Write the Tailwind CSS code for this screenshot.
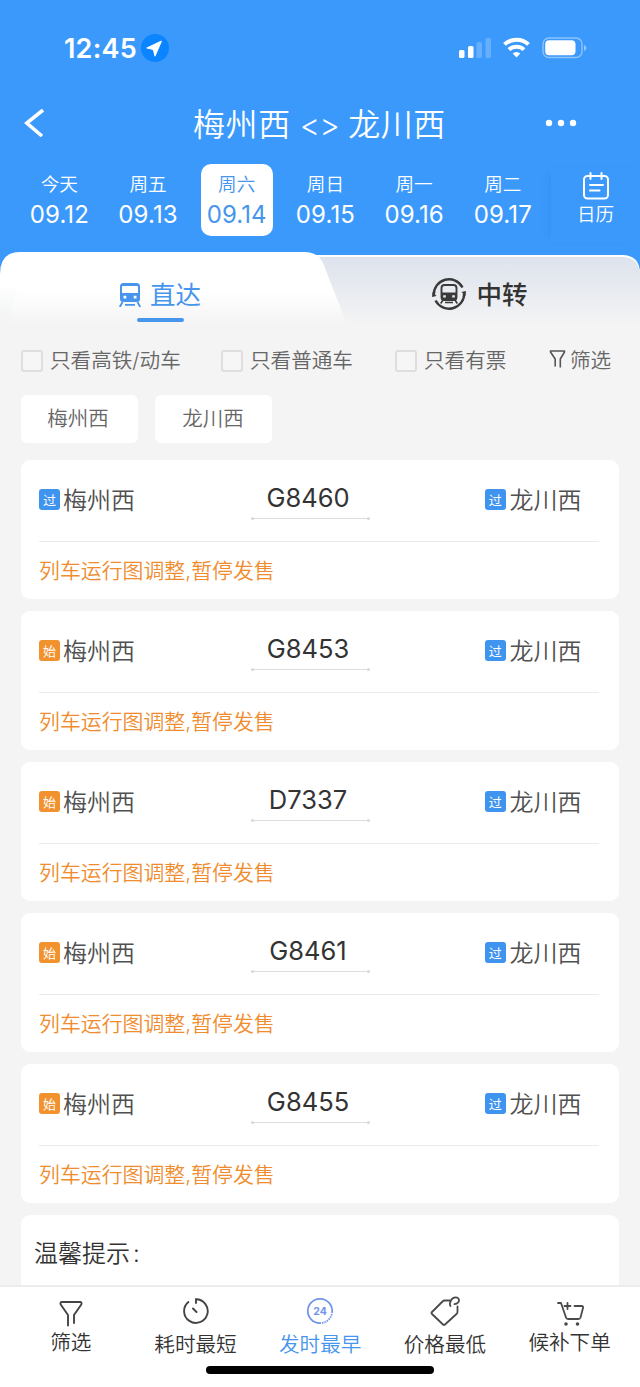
<!DOCTYPE html>
<html lang="zh-CN">
<head>
<meta charset="utf-8">
<title>梅州西 - 龙川西</title>
<script src="https://cdn.jsdelivr.net/npm/@tailwindcss/browser@4"></script>
</head>
<body class="w-[640px] h-[1387px] overflow-hidden bg-[#f4f4f4] font-['Inter','Noto_Sans_CJK_SC',sans-serif] font-[350] whitespace-nowrap">
<div class="flex h-[1387px] w-[640px] flex-col overflow-hidden">

<header class="h-[252px] shrink-0 bg-[#3b99fc] text-white">
  <div class="flex h-24 items-center pl-[64px] pr-[53px]">
    <span class="w-[77px] pt-[2px] text-[27px] font-semibold tracking-[0.2px]">12:45</span>
    <svg class="size-7" viewBox="0 0 28 28"><circle cx="14" cy="14" r="14" fill="#0a84ff"/><path d="M20.200 7.400 6 14l6.400 1.400L14 21.800z" fill="#fff" stroke="#fff" stroke-width="1.200" stroke-linejoin="round"/></svg>
    <svg class="ml-auto h-[22px] w-[128px]" viewBox="0 0 128 22" fill="#fff">
      <rect x="0" y="13" width="5.500" height="8" rx="1.600"/><rect x="9" y="9" width="5.500" height="12" rx="1.600"/><rect x="17.500" y="5" width="5.500" height="16" rx="1.600" opacity=".22"/><rect x="26.500" y="1" width="5.500" height="20" rx="1.600" opacity=".22"/>
      <g fill="none" stroke="#fff" stroke-width="4"><path d="M45.500 7.400a17.500 17.500 0 0 1 24 0"/><path d="M50 12.600a11 11 0 0 1 15 0"/></g><path d="M57.500 20.500 53.700 16.600a5.500 5.500 0 0 1 7.600 0z"/>
      <rect x="84" y="1" width="39" height="19.500" rx="6" fill="none" stroke="#fff" stroke-width="1.400" opacity=".42"/><rect x="86.200" y="3.300" width="30.300" height="15" rx="4"/><path d="M125.200 8v6q2.200-1 2.200-3t-2.200-3z" opacity=".5"/>
    </svg>
  </div>
  <div class="flex h-14 items-center pl-[24px]">
    <svg class="mb-[2px] h-7 w-[169px]" viewBox="0 0 169 28"><path d="M19 1 2.800 14 18 27" fill="none" stroke="#fff" stroke-width="3.600"/></svg>
    <div class="flex w-[253px] items-center justify-between pt-px text-[32px] leading-[48px]"><span class="tracking-[0.6px]">梅州西</span><span class="text-[31px] tracking-[-0.500px]">&lt;&gt;</span><span class="tracking-[0.6px]">龙川西</span></div>
    <svg class="ml-[96px] mb-[2px] h-2 w-[36px]" viewBox="0 0 36 8" fill="#fff"><circle cx="7" cy="4" r="3.200"/><circle cx="19" cy="4" r="3.200"/><circle cx="31" cy="4" r="3.200"/></svg>
  </div>
  <div class="flex pl-[15px] pt-3">
    <div class="flex w-[88.700px] justify-center"><div class="flex h-[72px] w-[72px] flex-col items-center pt-[7px]"><span class="text-[18.600px] leading-[27px]">今天</span><span class="text-[24px] font-normal leading-[33px] tracking-[0.1px]">09.12</span></div></div>
    <div class="flex w-[88.700px] justify-center"><div class="flex h-[72px] w-[72px] flex-col items-center pt-[7px]"><span class="text-[18.600px] leading-[27px]">周五</span><span class="text-[24px] font-normal leading-[33px] tracking-[0.1px]">09.13</span></div></div>
    <div class="flex w-[88.700px] justify-center"><div class="flex h-[72px] w-[72px] flex-col items-center rounded-[10px] bg-white pt-[7px] text-[#4795ec]"><span class="text-[18.600px] leading-[27px]">周六</span><span class="text-[24px] font-normal leading-[33px] tracking-[0.1px]">09.14</span></div></div>
    <div class="flex w-[88.700px] justify-center"><div class="flex h-[72px] w-[72px] flex-col items-center pt-[7px]"><span class="text-[18.600px] leading-[27px]">周日</span><span class="text-[24px] font-normal leading-[33px] tracking-[0.1px]">09.15</span></div></div>
    <div class="flex w-[88.700px] justify-center"><div class="flex h-[72px] w-[72px] flex-col items-center pt-[7px]"><span class="text-[18.600px] leading-[27px]">周一</span><span class="text-[24px] font-normal leading-[33px] tracking-[0.1px]">09.16</span></div></div>
    <div class="flex w-[88.700px] justify-center"><div class="flex h-[72px] w-[72px] flex-col items-center pt-[7px]"><span class="text-[18.600px] leading-[27px]">周二</span><span class="text-[24px] font-normal leading-[33px] tracking-[0.1px]">09.17</span></div></div>
    <div class="ml-[4px] mt-1 flex h-[74px] flex-1 flex-col items-center bg-[#3b99fc] pt-1 shadow-[-6px_0_8px_-5px_rgba(30,110,210,0.22)]">
      <svg class="size-[28px]" viewBox="0 0 28 28" fill="none" stroke="#fff" stroke-width="2"><rect x="2" y="4" width="24" height="22.500" rx="3.500"/><path d="M8.500 1v6M19.500 1v6M8 13h13M8 18.500h9.500" stroke-linecap="round"/></svg>
      <span class="text-[18.500px] leading-[29px]">日历</span>
    </div>
  </div>
</header>

<nav class="relative h-[78px] shrink-0">
  <svg class="absolute inset-0 h-[78px] w-[640px]" viewBox="0 0 640 78">
    <defs>
      <linearGradient id="g1" gradientUnits="userSpaceOnUse" x1="0" y1="0" x2="0" y2="72"><stop offset="0" stop-color="#fff"/><stop offset=".55" stop-color="#fff"/><stop offset="1" stop-color="#f4f4f4"/></linearGradient>
      <linearGradient id="g2" x1="0" y1="0" x2="0" y2="1"><stop offset="0" stop-color="#dde3ed"/><stop offset=".95" stop-color="#f4f4f4"/></linearGradient>
      <linearGradient id="g3" gradientUnits="userSpaceOnUse" x1="0" y1="0" x2="0" y2="78"><stop offset="0" stop-color="#fff"/><stop offset=".42" stop-color="#fff"/><stop offset=".8" stop-color="#f4f5f5"/><stop offset="1" stop-color="#f4f4f4"/></linearGradient>
    </defs>
    <rect width="640" height="30" fill="#3b99fc"/>
    <path d="M300 3H622Q640 3 640 22V78H300z" fill="#fff"/>
    <path d="M300 5H621Q640 5 640 24V78H300z" fill="url(#g2)"/>
    <path d="M0 22Q0 0 20 0H150V78H0z" fill="url(#g3)"/>
    <path d="M17 40Q21 0 34 0H304Q318 0 323 11L348 75V78H4z" fill="url(#g1)"/>
  </svg>
  <div class="relative flex h-[78px]">
    <div class="flex w-[320px] flex-col items-center pt-[24px] text-[#4795ec]">
      <div class="flex items-center gap-[9px]">
        <svg class="mb-px h-6 w-[22px]" viewBox="0 0 22 24"><path fill="#4795ec" fill-rule="evenodd" d="M4.500 0h13Q21 0 21 3.500V16q0 3-3 3H4q-3 0-3-3V3.500Q1 0 4.500 0zM4 3Q3 3 3 4v6h16V4q0-1-1-1zM4.500 12.800v2.800h2.800v-2.800zM14.700 12.800v2.800h2.800v-2.800z"/><path d="M3.500 19 .8 24M18.500 19l2.700 5M6 21.900h10" stroke="#4795ec" stroke-width="1.800"/></svg>
        <span class="text-[25.500px] font-normal leading-[38px]">直达</span>
      </div>
      <div class="mt-[4px] h-1 w-[47px] rounded-full bg-[#4795ec]"></div>
    </div>
    <div class="flex w-[320px] items-start justify-center gap-[10px] pt-[24px] text-[#333]">
      <svg class="mt-[1px] size-[34px]" viewBox="0 0 34 34" fill="none" stroke="#3a3a3a"><path d="M1.800 18A15.200 15.200 0 0 1 30.500 10.500M32.200 16A15.200 15.200 0 0 1 3.500 23.500" stroke-width="2.400"/><path d="M.500 15 0 20l4.500-1zM33.500 19l.5-5-4.500 1z" fill="#3a3a3a" stroke="none"/><rect x="9.500" y="8" width="15" height="15" rx="3" stroke-width="1.900"/><path d="M9.500 16h15v5q0 2-2 2h-11q-2 0-2-2z" fill="#3a3a3a"/><path d="M11.200 19.300h2.600M20.200 19.300h2.600" stroke="#eee" stroke-width="2.200"/><path d="m11 23-2.300 3.500M23 23l2.300 3.500M13 25.500h8" stroke-width="1.600"/></svg>
      <span class="text-[25.500px] font-medium leading-[38px]">中转</span>
    </div>
  </div>
</nav>

<div class="flex h-[61px] shrink-0 items-center pl-[21px] text-[20.600px] leading-[30px] text-[#666]">
  <div class="flex w-[200px] items-center gap-[7px]"><i class="size-[22px] rounded-[3px] border-2 border-[#dedede] bg-[#f6f6f6]"></i><span class="pt-px">只看高铁/动车</span></div>
  <div class="flex w-[174px] items-center gap-[7px]"><i class="size-[22px] rounded-[3px] border-2 border-[#dedede] bg-[#f6f6f6]"></i><span class="pt-px">只看普通车</span></div>
  <div class="flex w-[154px] items-center gap-[7px]"><i class="size-[22px] rounded-[3px] border-2 border-[#dedede] bg-[#f6f6f6]"></i><span class="pt-px">只看有票</span></div>
  <div class="flex items-center gap-[4px]"><svg class="mb-[3px] h-[18px] w-[17px]" viewBox="0 0 17 18" fill="none" stroke="#555" stroke-width="1.600"><path d="M6.200 16.500V9L1.500 2V1h14v1l-4.200 7v8.500" stroke-linejoin="round"/></svg><span>筛选</span></div>
</div>

<div class="flex h-[69px] shrink-0 gap-[17px] pl-[20.500px] pt-[3.500px] text-[20.500px] leading-[47px] text-[#666]">
  <div class="h-[48px] w-[117px] rounded-md bg-white pr-[2px] text-center">梅州西</div>
  <div class="h-[48px] w-[117px] rounded-md bg-white text-center">龙川西</div>
</div>

<main id="list" class="flex h-[825px] shrink-0 flex-col gap-3 overflow-hidden px-[21px]">
  <template id="card">
    <section class="h-[139px] shrink-0 rounded-[9px] bg-white pl-[18px] pr-[20px]">
      <div class="flex h-[82px] items-start border-b border-[#ebebeb] pt-[20px]">
        <div class="flex items-center gap-[3px] pt-[1px]"><b class="from grid h-[21px] w-[21px] place-items-center rounded-[3px] pt-px text-[13px] font-normal leading-[20px] text-white"></b><span class="pt-[3px] text-[24px] leading-[33px] text-[#505050]">梅州西</span></div>
        <div class="ml-[116px] w-[119px] text-center">
          <div class="num pr-[5px] text-[25.500px] font-normal leading-[36px] text-[#333]"></div>
          <div class="mt-[1px] flex h-[3px] items-center justify-between bg-[linear-gradient(#ddd,#ddd)] bg-[length:100%_1px] bg-center bg-no-repeat"><i class="h-[3px] w-[3px] rounded-full bg-[#d9d9d9]"></i><i class="h-[3px] w-[3px] rounded-full bg-[#d9d9d9]"></i></div>
        </div>
        <div class="ml-[115px] flex items-center gap-[4px] pt-[1px]"><b class="grid h-[21px] w-[20.500px] place-items-center rounded-[3px] bg-[#3f94f0] pt-px text-[13px] font-normal leading-[20px] text-white">过</b><span class="pt-[3px] text-[24px] leading-[33px] text-[#505050]">龙川西</span></div>
      </div>
      <div class="text-[20.900px] leading-[57px] text-[#f08c2e]">列车运行图调整,暂停发售</div>
    </section>
  </template>
  <section class="h-[139px] shrink-0 rounded-[9px] bg-white px-[13px] pt-[21px] text-[24px] leading-[36px] text-[#333]">温馨提示<span class="ml-[3px]">:</span></section>
</main>

<footer class="h-[102px] shrink-0 border-t-2 border-[#ececec] bg-white text-[20.600px] leading-[30px] text-[#333]">
  <div class="flex h-[76px] pl-[8.500px]">
    <div class="flex w-[124.700px] flex-col items-center pt-[12px]"><svg class="h-[28px] w-[24px]" viewBox="0 0 24 28" fill="none" stroke="#444" stroke-width="1.900" stroke-linecap="round" stroke-linejoin="round"><path d="M9 26.500V16L1.700 5.500Q.800 3 3 3h18q2.200 0 1.300 2.500L15 16v8"/></svg><span class="mt-px">筛选</span></div>
    <div class="flex w-[124.700px] flex-col items-center pt-[10px]"><svg class="size-[28px]" viewBox="0 0 28 28" fill="none" stroke="#444" stroke-width="1.900" stroke-linecap="round"><path d="M14 6V2.300A11.800 11.800 0 1 1 6.400 5M11 11.500l3.500 3.500"/></svg><span class="mt-[5px]">耗时最短</span></div>
    <div class="flex w-[124.700px] flex-col items-center pt-[10px] text-[#4795ec]"><svg class="size-[28px]" viewBox="0 0 28 28"><circle cx="14" cy="14" r="12.200" fill="none" stroke="#6f93ea" stroke-width="1.700"/><path d="M26 16A12.200 12.200 0 0 1 14 26.200" fill="none" stroke="#fff" stroke-width="2" stroke-dasharray="1 1.500"/><text x="14" y="17.800" text-anchor="middle" font-family="Inter" font-size="10.500" font-weight="700" fill="#6f93ea">24</text></svg><span class="mt-[5px]">发时最早</span></div>
    <div class="flex w-[124.700px] flex-col items-center pt-[9px]"><svg class="h-[30px] w-[30px]" viewBox="0 0 30 30" fill="none" stroke="#4a4a4a" stroke-width="1.800" stroke-linecap="round" stroke-linejoin="round"><path d="M20 4.500h-5.500q-1 0-2 1L2 16q-1 1 0 2l11 10.500q1 1 2 0L26.500 18q1-.8 1-2v-5.500M20.500 10q-1.500-2 .5-5.500c1.800-4 8-4 8-.3q0 3-4.500 4"/></svg><span class="mt-[4px]">价格最低</span></div>
    <div class="flex w-[124.700px] flex-col items-center pt-[14px]"><svg class="ml-px h-[26px] w-[27px]" viewBox="0 0 27 26" fill="none" stroke="#4a4a4a" stroke-width="1.800" stroke-linecap="round" stroke-linejoin="round"><path d="M1 2h3l5 14.500q.500 1.500 2 1.500h10.500q1.500 0 2-1.500L26 7q.500-2-1.500-2h-7M7.500 5h6M10.500 2v6"/><circle cx="9" cy="23" r=".9" fill="#444"/><circle cx="20.500" cy="23" r=".9" fill="#444"/></svg><span class="mt-px">候补下单</span></div>
  </div>
  <div class="mx-auto mt-[3px] h-[8px] w-[228px] rounded-full bg-black"></div>
</footer>
</div>
<script>
const list = document.getElementById('list'), tpl = document.getElementById('card'), tip = list.lastElementChild;
const tone = { '过': 'bg-[#3f94f0]', '始': 'bg-[#f2922f]' };
[['过', 'G8460'], ['始', 'G8453'], ['始', 'D7337'], ['始', 'G8461'], ['始', 'G8455']].forEach(([kind, num]) => {
  const n = tpl.content.cloneNode(true), b = n.querySelector('.from');
  b.textContent = kind;
  b.classList.add(tone[kind]);
  n.querySelector('.num').textContent = num;
  list.insertBefore(n, tip);
});
</script>
</body>
</html>
